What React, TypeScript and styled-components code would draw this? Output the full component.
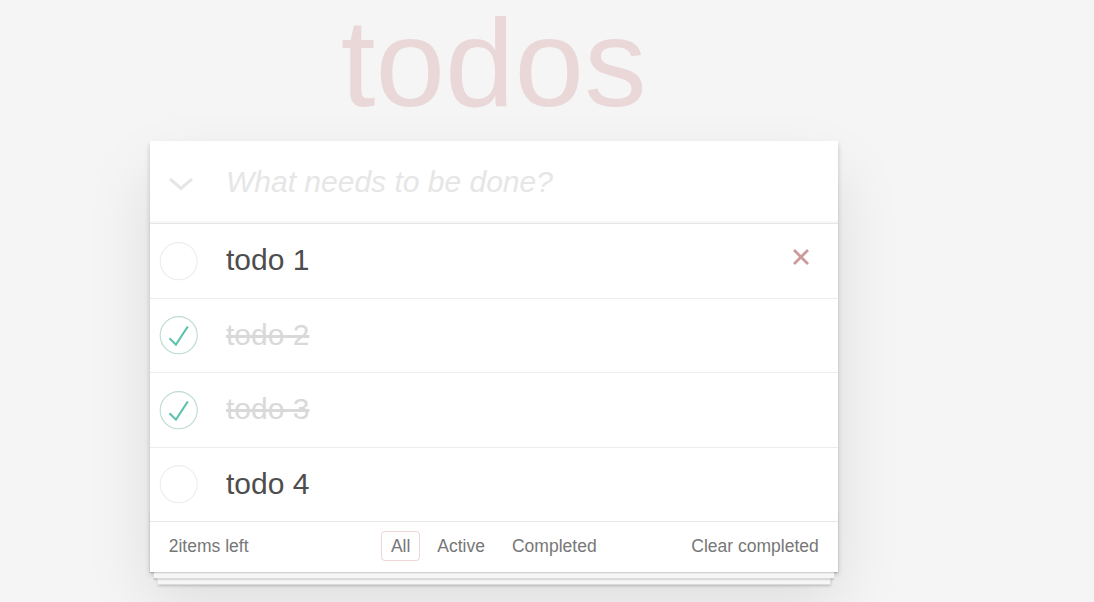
import React, { useState } from 'react'
import styled, { createGlobalStyle } from 'styled-components'

const GlobalStyle = createGlobalStyle`
    html, body {
        margin: 0;
        padding: 0;
    }
    body {
        background: #f5f5f5;
        color: #4d4d4d;
        font-family: 'Liberation Sans', Arial, sans-serif;
        font-size: 17.5px;
        line-height: 24.5px;
        -webkit-font-smoothing: antialiased;
    }
`

const Page = styled.div`
    width: 687.5px;
    margin: 0 0 0 150px;
    padding-bottom: 30px;
`

const Title = styled.h1`
    margin: 0 0 16px;
    height: 125px;
    line-height: 125px;
    font-size: 125px;
    font-weight: 100;
    text-align: center;
    color: rgba(175, 47, 47, 0.15);
`

const Card = styled.section`
    position: relative;
    background: #fff;
    box-shadow: 0 2.5px 5px 0 rgba(0, 0, 0, 0.2), 0 31px 62px 0 rgba(0, 0, 0, 0.1);
`

const Header = styled.header`
    display: flex;
    align-items: center;
    height: 82px;
    box-shadow: inset 0 -2px 1px rgba(0, 0, 0, 0.03);
`

const ToggleAll = styled.div`
    width: 75px;
    flex: none;
    display: flex;
    padding: 4px 0 0 18px;
    box-sizing: border-box;
`

const NewTodo = styled.input`
    flex: 1;
    border: none;
    outline: none;
    background: transparent;
    padding: 0 0 0 1px;
    font-family: inherit;
    font-size: 30px;
    line-height: 42px;
    color: #4d4d4d;
    &::placeholder {
        font-style: italic;
        color: #e6e6e6;
    }
`

const List = styled.ul`
    margin: 0;
    padding: 0;
    list-style: none;
    border-top: 1.25px solid #e6e6e6;
`

const Row = styled.li`
    display: flex;
    align-items: center;
    border-bottom: 1.25px solid #ededed;
    &:last-child {
        border-bottom: none;
    }
`

const Toggle = styled.div`
    width: 75px;
    flex: none;
    display: flex;
    cursor: pointer;
`

const Label = styled.label<{ $done: boolean }>`
    flex: 1;
    font-size: 30px;
    line-height: 36px;
    padding: 18px 0 19.5px 1px;
    color: ${(p) => (p.$done ? '#d9d9d9' : '#4d4d4d')};
    text-decoration: ${(p) => (p.$done ? 'line-through' : 'none')};
`

const Destroy = styled.button`
    display: flex;
    align-items: center;
    justify-content: center;
    width: 50px;
    height: 50px;
    margin: 0 12px 7px 0;
    padding: 0;
    border: none;
    background: none;
    cursor: pointer;
`

const Footer = styled.footer`
    position: relative;
    display: grid;
    grid-template-columns: 1fr auto 1fr;
    align-items: center;
    height: 25px;
    padding: 12px 18.75px 13px;
    color: #777;
    line-height: 25px;
    border-top: 1.25px solid #e6e6e6;
    &::before {
        content: '';
        position: absolute;
        right: 0;
        bottom: 0;
        left: 0;
        height: 62px;
        box-shadow: 0 1.25px 1.25px rgba(0, 0, 0, 0.2), 0 10px 0 -3.75px #f6f6f6,
            0 11.25px 1.25px -3.75px rgba(0, 0, 0, 0.2), 0 20px 0 -7.5px #f6f6f6,
            0 21.25px 2.5px -7.5px rgba(0, 0, 0, 0.2);
        pointer-events: none;
    }
`

const Count = styled.span`
    justify-self: start;
`

const Filters = styled.ul`
    margin: 0;
    padding: 0;
    list-style: none;
    text-align: center;
`

const Filter = styled.li`
    display: inline;
`

const FilterLink = styled.a<{ $selected: boolean }>`
    color: inherit;
    margin: 3.75px;
    padding: 3.75px 8.75px;
    text-decoration: none;
    border: 1.25px solid ${(p) => (p.$selected ? 'rgba(175, 47, 47, 0.2)' : 'transparent')};
    border-radius: 3.75px;
    cursor: pointer;
`

const Clear = styled.span`
    justify-self: end;
    cursor: pointer;
`

const Chevron = () => (
    <svg width="26" height="14" viewBox="0 0 26 14">
        <polyline points="2,2 13,11.5 24,2" fill="none" stroke="#e6e6e6" strokeWidth="3" />
    </svg>
)

const Cross = () => (
    <svg width="18" height="18" viewBox="0 0 18 18">
        <path d="M2 2L16 16M16 2L2 16" stroke="#cc9a9a" strokeWidth="2.8" />
    </svg>
)

const Check = ({ done }: { done: boolean }) => (
    <svg width="50" height="50" viewBox="-10 -18 100 135">
        <circle cx="50" cy="50" r="50" fill="none" stroke={done ? '#bddad5' : '#ededed'} strokeWidth="3" />
        {done && <path fill="#5dc2af" d="M72 25L42 71 27 56l-4 4 20 20 34-52z" />}
    </svg>
)

const initial = [
    { id: 1, title: 'todo 1', done: false },
    { id: 2, title: 'todo 2', done: true },
    { id: 3, title: 'todo 3', done: true },
    { id: 4, title: 'todo 4', done: false },
]

export default function App() {
    const [todos, setTodos] = useState(initial)
    const [filter, setFilter] = useState('All')
    const left = todos.filter((t) => !t.done).length

    const toggle = (id: number) =>
        setTodos(todos.map((t) => (t.id === id ? { ...t, done: !t.done } : t)))
    const remove = (id: number) => setTodos(todos.filter((t) => t.id !== id))

    return (
        <>
            <GlobalStyle />
            <Page>
                <Title>todos</Title>
                <Card>
                    <Header>
                        <ToggleAll>
                            <Chevron />
                        </ToggleAll>
                        <NewTodo placeholder="What needs to be done?" />
                    </Header>
                    <List>
                        {todos.map((t) => (
                            <Row key={t.id}>
                                <Toggle onClick={() => toggle(t.id)}>
                                    <Check done={t.done} />
                                </Toggle>
                                <Label $done={t.done}>{t.title}</Label>
                                {t.id === 1 && (
                                    <Destroy onClick={() => remove(t.id)} aria-label="Delete">
                                        <Cross />
                                    </Destroy>
                                )}
                            </Row>
                        ))}
                    </List>
                    <Footer>
                        <Count>{left}items left</Count>
                        <Filters>
                            {['All', 'Active', 'Completed'].map((f) => (
                                <Filter key={f}>
                                    <FilterLink $selected={filter === f} onClick={() => setFilter(f)}>
                                        {f}
                                    </FilterLink>
                                </Filter>
                            ))}
                        </Filters>
                        <Clear>Clear completed</Clear>
                    </Footer>
                </Card>
            </Page>
        </>
    )
}
